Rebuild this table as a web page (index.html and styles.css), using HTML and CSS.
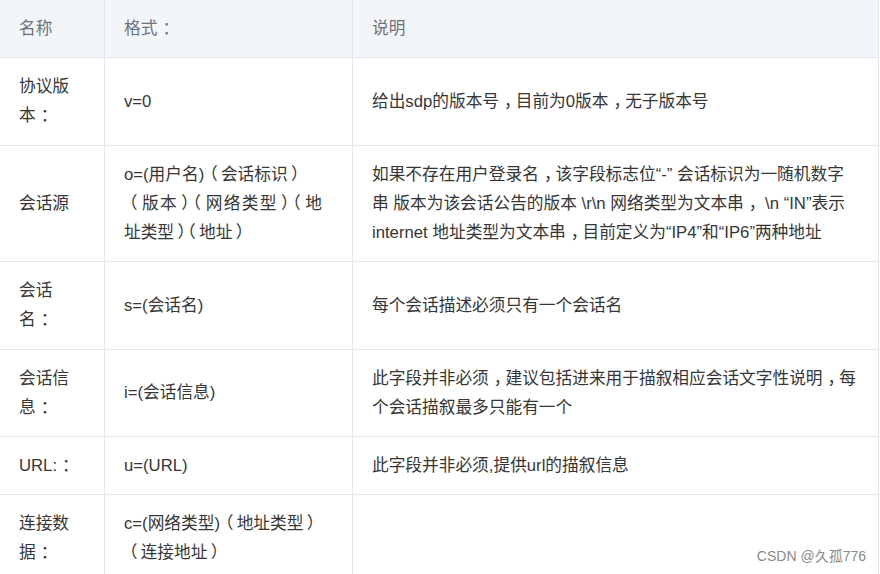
FILE: index.html
```html
<!DOCTYPE html>
<html lang="zh">
<head>
<meta charset="utf-8">
<title>SDP</title>
<link rel="stylesheet" href="styles.css">
</head>
<body>
<div class="page">
  <table class="sdp">
    <colgroup>
      <col class="c1"><col class="c2"><col class="c3">
    </colgroup>
    <thead>
      <tr><th>名称</th><th>格式<span class="pc">：</span></th><th>说明</th></tr>
    </thead>
    <tbody>
      <tr>
        <td>协议版本<span class="pc">：</span></td>
        <td class="fmt">v=0</td>
        <td>给出sdp的版本号<span class="pc">，</span>目前为0版本<span class="pc">，</span>无子版本号</td>
      </tr>
      <tr>
        <td>会话源</td>
        <td class="fmt just">o=(用户名)<span class="po">（</span>会话标识<span class="px">）</span><br><span class="po">（</span>版本<span class="px">）</span><span class="po">（</span>网络类型<span class="px">）</span><span class="po">（</span>地址类型<span class="px">）</span><span class="po">（</span>地址<span class="px">）</span></td>
        <td>如果不存在用户登录名<span class="pc">，</span>该字段标志位“-” 会话标识为一随机数字串 版本为该会话公告的版本 \r\n 网络类型为文本串<span class="pc">，</span> \n “IN”表示internet 地址类型为文本串<span class="pc">，</span>目前定义为“IP4”和“IP6”两种地址</td>
      </tr>
      <tr>
        <td>会话名<span class="pc">：</span></td>
        <td class="fmt">s=(会话名)</td>
        <td>每个会话描述必须只有一个会话名</td>
      </tr>
      <tr>
        <td>会话信息<span class="pc">：</span></td>
        <td class="fmt">i=(会话信息)</td>
        <td>此字段并非必须<span class="pc">，</span>建议包括进来用于描叙相应会话文字性说明<span class="pc">，</span>每个会话描叙最多只能有一个</td>
      </tr>
      <tr>
        <td>URL:<span class="pc">：</span></td>
        <td class="fmt">u=(URL)</td>
        <td>此字段并非必须,提供url的描叙信息</td>
      </tr>
      <tr>
        <td>连接数据<span class="pc">：</span></td>
        <td class="fmt">c=(网络类型)<span class="po">（</span>地址类型<span class="px">）</span><span class="po">（</span>连接地址<span class="px">）</span></td>
        <td></td>
      </tr>
    </tbody>
  </table>
  <div class="mark">CSDN @久孤776</div>
</div>
</body>
</html>
```
FILE: styles.css
```css
html, body {
  margin: 0;
  padding: 0;
  background: #ffffff;
  overflow: hidden;
}
.page {
  position: relative;
  width: 880px;
  height: 574px;
  overflow: hidden;
}
.sdp {
  border-collapse: collapse;
  table-layout: fixed;
  width: 880px;
  margin: -1px 0 0 -1px;
  font-family: "Liberation Sans", "Noto Sans CJK SC", sans-serif;
  font-size: 16.7px;
  line-height: 29.2px;
  color: #363636;
}
.c1 { width: 105px; }
.c2 { width: 248px; }
.c3 { width: auto; }
.sdp th, .sdp td {
  border: 1px solid #e2e7ef;
  padding: 14px 19px;
  text-align: left;
  vertical-align: middle;
}
.sdp th {
  background: #f3f6f9;
  color: #707376;
  font-weight: normal;
}
.sdp td.fmt {
  padding-right: 30px;
}
.sdp td.just {
  text-align: justify;
}
/* centre full-width punctuation in its em box */
.pc {
  position: relative;
  left: 0.3em;
}
.px {
  position: relative;
  left: 0.2em;
}
.po {
  position: relative;
  left: -0.2em;
}
.mark {
  position: absolute;
  right: 14px;
  bottom: 9px;
  font-family: "Liberation Sans", "Noto Sans CJK SC", sans-serif;
  font-size: 14px;
  color: #8a8a8a;
}
```
